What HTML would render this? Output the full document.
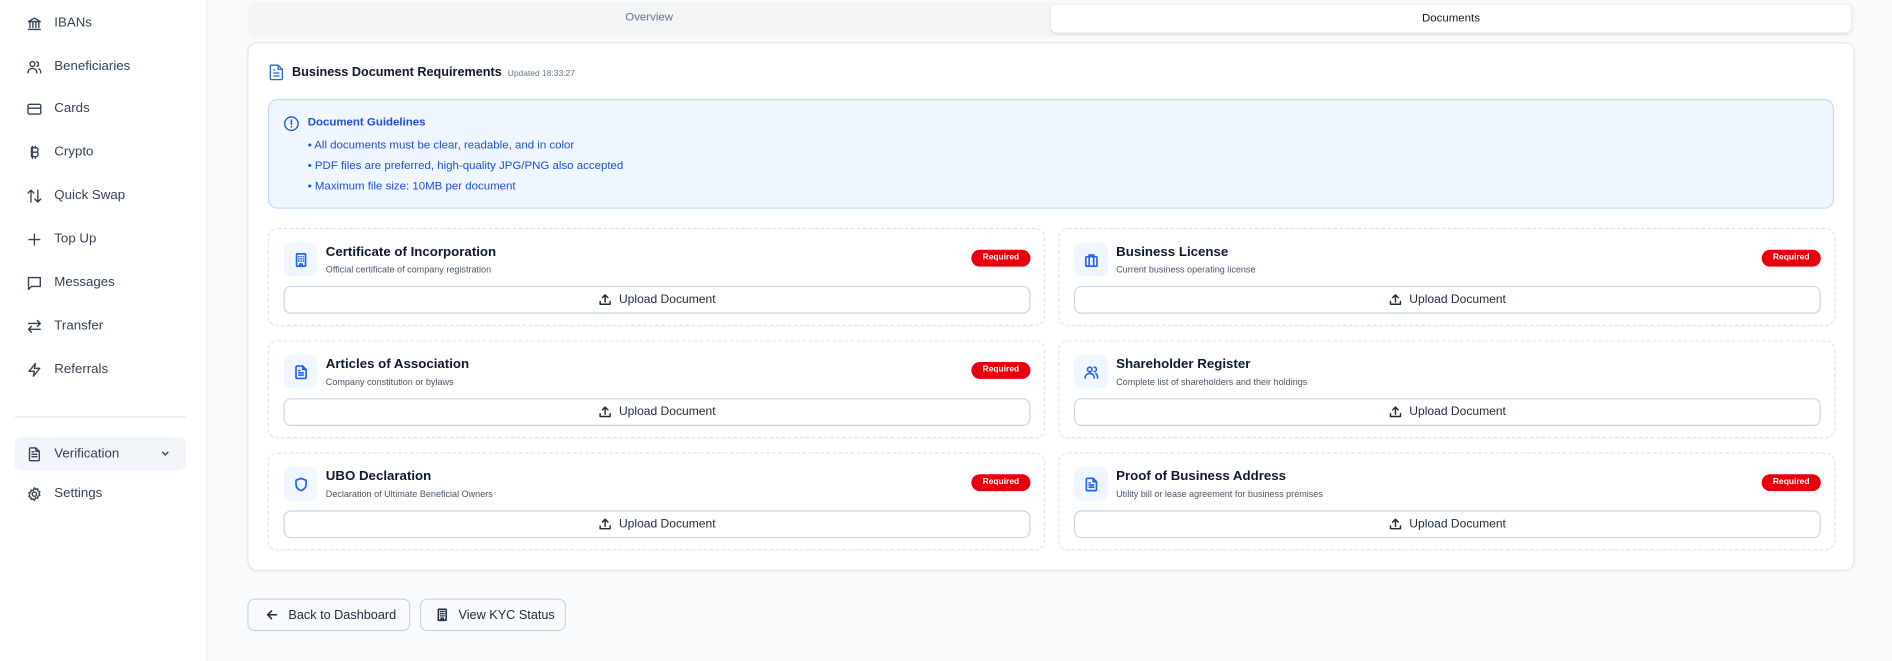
<!DOCTYPE html>
<html><head><meta charset="utf-8"><style>
*{box-sizing:border-box;margin:0;padding:0}
html,body{width:1892px;height:661px;overflow:hidden;background:#f8fafc;font-family:"Liberation Sans",sans-serif}
#w{position:absolute;left:0;top:0;width:1568px;height:548px;transform:scale(1.20663);transform-origin:0 0;background:#f8fafc}
.abs{position:absolute}
.side{left:0;top:0;width:172px;height:548px;background:#fff;border-right:1px solid #eef0f3}
.nav{position:absolute;left:22px;font-size:11px;color:#334155;display:flex;align-items:center;height:16px}
.nav svg{width:13px;height:13px;margin-right:10px;stroke:#334155;fill:none;stroke-width:1.4;stroke-linecap:round;stroke-linejoin:round}
.card{position:absolute;border:1px dashed #dfe3e8;border-radius:8px;background:#fff;width:644px;height:81px;box-shadow:0 1px 2px rgba(0,0,0,.04)}
.ib{position:absolute;left:12px;top:11px;width:28px;height:28px;border-radius:6px;background:#eff6ff;display:flex;align-items:center;justify-content:center}
.ib svg{width:13px;height:13px;stroke:#2563eb;fill:none;stroke-width:1.5;stroke-linecap:round;stroke-linejoin:round}
.t{position:absolute;left:47px;top:13px;font-size:11px;font-weight:600;color:#0f172a}
.d{position:absolute;left:47px;top:29px;font-size:7.5px;color:#475569}
.req{position:absolute;right:11px;top:17px;height:14px;width:49px;border-radius:7px;background:#e7000b;color:#fff;font-size:7px;font-weight:700;text-align:center;line-height:14px}
.up{position:absolute;left:12px;right:11px;top:47px;height:23px;border:1px solid #cbd5e1;border-radius:6px;display:flex;align-items:center;justify-content:center;font-size:10px;color:#1e293b;font-weight:400}
.up svg{width:11px;height:11px;margin-right:6px;stroke:#1e293b;fill:none;stroke-width:1.3;stroke-linecap:round;stroke-linejoin:round}
.btn{position:absolute;top:496px;height:27px;border:1px solid #cbd5e1;border-radius:6px;background:#f8fafc;display:flex;align-items:center;font-size:10.5px;font-weight:400;color:#1e293b}
.btn svg{width:11px;height:11px;stroke:#1e293b;fill:none;stroke-width:1.4;margin:0 8px 0 14px;stroke-linecap:round;stroke-linejoin:round}
.gl{font-size:9.5px;color:#1d4ed8;position:absolute;left:32px}
</style></head><body><div id="w">
<div class="abs side">
<div class="nav" style="top:11px"><svg viewBox="0 0 16 16"><path d="M2 6h12L8 2.5zM3.5 7v5M6.5 7v5M9.5 7v5M12.5 7v5M2 14h12"/></svg>IBANs</div>
<div class="nav" style="top:47px"><svg viewBox="0 0 16 16"><circle cx="6" cy="5" r="2.5"/><path d="M1.5 14c0-3 2-4.5 4.5-4.5s4.5 1.5 4.5 4.5M10.5 2.7a2.5 2.5 0 010 4.7M12.5 10c1.3.6 2 2 2 4"/></svg>Beneficiaries</div>
<div class="nav" style="top:82px"><svg viewBox="0 0 16 16"><rect x="1.5" y="3" width="13" height="10" rx="1.5"/><path d="M1.5 7h13"/></svg>Cards</div>
<div class="nav" style="top:118px"><svg viewBox="0 0 16 16"><path d="M5 3h4.5a2.2 2.2 0 010 4.5H5M5 7.5h5a2.3 2.3 0 010 4.5H5M6 1.5v12.5M9 1.5v2M9 12v2M5 3v9"/></svg>Crypto</div>
<div class="nav" style="top:154px"><svg viewBox="0 0 16 16"><path d="M4.5 14V2M1.5 5l3-3 3 3M11.5 2v12M8.5 11l3 3 3-3"/></svg>Quick Swap</div>
<div class="nav" style="top:190px"><svg viewBox="0 0 16 16"><path d="M8 2.5v11M2.5 8h11"/></svg>Top Up</div>
<div class="nav" style="top:226px"><svg viewBox="0 0 16 16"><path d="M2 2.5h12v9H5l-3 3z"/></svg>Messages</div>
<div class="nav" style="top:262px"><svg viewBox="0 0 16 16"><path d="M2 5h12M11 2l3 3-3 3M14 11H2M5 8l-3 3 3 3"/></svg>Transfer</div>
<div class="nav" style="top:298px"><svg viewBox="0 0 16 16"><path d="M9 1.5L2.5 9.5H8L7 14.5l6.5-8H8z"/></svg>Referrals</div>
<div class="abs" style="left:12px;top:345px;width:142px;height:1px;background:#e2e8f0"></div>
<div class="abs" style="left:12px;top:362px;width:142px;height:28px;border-radius:6px;background:#f1f5f9"></div>
<div class="nav" style="top:368px"><svg viewBox="0 0 16 16"><path d="M9.5 1.5H4a1 1 0 00-1 1v11a1 1 0 001 1h8a1 1 0 001-1V5z M9.5 1.5V5H13M5.5 8h5M5.5 10.5h5M5.5 5.5h2"/></svg>Verification</div>
<svg class="abs" style="left:133px;top:372px;width:8px;height:8px" viewBox="0 0 8 8"><path d="M1.5 2.5L4 5l2.5-2.5" stroke="#334155" fill="none" stroke-width="1.1"/></svg>
<div class="nav" style="top:401px"><svg viewBox="0 0 16 16"><circle cx="8" cy="8" r="2.2"/><path d="M8 1.5l1.3 1.7 2-.6.3 2.1 2 .8-.9 1.9.9 1.9-2 .8-.3 2.1-2-.6L8 14.5l-1.3-1.7-2 .6-.3-2.1-2-.8.9-1.9-.9-1.9 2-.8.3-2.1 2 .6z"/></svg>Settings</div>
</div>

<div class="abs" style="left:205px;top:2px;width:1332px;height:28px;background:#f3f4f5;border-radius:6px"></div>
<div class="abs" style="left:205px;top:9px;width:666px;text-align:center;font-size:9.5px;color:#64748b">Overview</div>
<div class="abs" style="left:871px;top:4px;width:663px;height:23px;background:#fff;border-radius:5px;box-shadow:0 1px 2px rgba(0,0,0,.1);text-align:center;font-size:9.5px;line-height:23px;color:#0f172a">Documents</div>

<div class="abs" style="left:205px;top:35px;width:1332px;height:438px;background:#fff;border:1px solid #e5e7eb;border-radius:8px;box-shadow:0 1px 2px rgba(0,0,0,.05)">
<svg class="abs" style="left:17px;top:17px;width:12px;height:14px" viewBox="0 0 12 14"><path d="M7.5 1H2a1 1 0 00-1 1v10a1 1 0 001 1h8a1 1 0 001-1V4.5zM7.5 1v3.5H11M3.5 7.5h5M3.5 10h5M3.5 5h1.5" stroke="#2563eb" fill="none" stroke-width="1.1" stroke-linejoin="round"/></svg>
<div class="abs" style="left:36px;top:18px;font-size:10.5px;font-weight:600;color:#0f172a">Business Document Requirements <span style="font-size:7px;font-weight:400;color:#64748b;margin-left:2px">Updated 18:33:27</span></div>
<div class="abs" style="left:16px;top:46px;width:1298px;height:91px;background:#eff6ff;border:1px solid #bfdbfe;border-radius:8px">
<svg class="abs" style="left:12px;top:13px;width:13px;height:13px" viewBox="0 0 14 14"><circle cx="7" cy="7" r="6" stroke="#1d4ed8" fill="none" stroke-width="1.2"/><path d="M7 3.8v3.8M7 9.6v.3" stroke="#1d4ed8" stroke-width="1.3" stroke-linecap="round"/></svg>
<div class="gl" style="top:13px;font-weight:600;font-size:9.5px">Document Guidelines</div>
<div class="gl" style="top:32px">• All documents must be clear, readable, and in color</div>
<div class="gl" style="top:49px">• PDF files are preferred, high-quality JPG/PNG also accepted</div>
<div class="gl" style="top:66px">• Maximum file size: 10MB per document</div>
</div>
</div>

<div class="card" style="left:222px;top:189px"><div class="ib"><svg viewBox="0 0 14 14"><rect x="3" y="1.5" width="8" height="11" rx=".5"/><path d="M5 4h.1M7 4h.1M9 4h.1M5 6h.1M7 6h.1M9 6h.1M5 8h.1M7 8h.1M9 8h.1M6 12.5v-2h2v2"/></svg></div><div class="t">Certificate of Incorporation</div><div class="d">Official certificate of company registration</div><div class="req">Required</div><div class="up"><svg viewBox="0 0 12 12"><path d="M6 8V1.5M3.5 4L6 1.5 8.5 4M1.5 7.5v2.5h9V7.5"/></svg>Upload Document</div></div>
<div class="card" style="left:877px;top:189px"><div class="ib"><svg viewBox="0 0 14 14"><rect x="2" y="4" width="10" height="8.5" rx="1"/><path d="M5 4V2.5h4V4M5 4v8.5M9 4v8.5"/></svg></div><div class="t">Business License</div><div class="d">Current business operating license</div><div class="req">Required</div><div class="up"><svg viewBox="0 0 12 12"><path d="M6 8V1.5M3.5 4L6 1.5 8.5 4M1.5 7.5v2.5h9V7.5"/></svg>Upload Document</div></div>
<div class="card" style="left:222px;top:282px"><div class="ib"><svg viewBox="0 0 14 14"><path d="M8.5 1.5H3.5a1 1 0 00-1 1v9a1 1 0 001 1h7a1 1 0 001-1v-7zM8.5 1.5v3h3M5 7.5h4M5 9.5h4M5 5.5h1"/></svg></div><div class="t">Articles of Association</div><div class="d">Company constitution or bylaws</div><div class="req">Required</div><div class="up"><svg viewBox="0 0 12 12"><path d="M6 8V1.5M3.5 4L6 1.5 8.5 4M1.5 7.5v2.5h9V7.5"/></svg>Upload Document</div></div>
<div class="card" style="left:877px;top:282px"><div class="ib"><svg viewBox="0 0 14 14"><circle cx="5.5" cy="4.5" r="2"/><path d="M1.5 12c0-2.5 1.8-4 4-4s4 1.5 4 4M9.5 2.5a2 2 0 010 4M11 8.3c1 .5 1.5 1.8 1.5 3.7"/></svg></div><div class="t">Shareholder Register</div><div class="d">Complete list of shareholders and their holdings</div><div class="up"><svg viewBox="0 0 12 12"><path d="M6 8V1.5M3.5 4L6 1.5 8.5 4M1.5 7.5v2.5h9V7.5"/></svg>Upload Document</div></div>
<div class="card" style="left:222px;top:375px"><div class="ib"><svg viewBox="0 0 14 14"><path d="M7 1.5l4.5 1.8v3.7c0 2.8-2 4.6-4.5 5.5C4.5 11.6 2.5 9.8 2.5 7V3.3z"/></svg></div><div class="t">UBO Declaration</div><div class="d">Declaration of Ultimate Beneficial Owners</div><div class="req">Required</div><div class="up"><svg viewBox="0 0 12 12"><path d="M6 8V1.5M3.5 4L6 1.5 8.5 4M1.5 7.5v2.5h9V7.5"/></svg>Upload Document</div></div>
<div class="card" style="left:877px;top:375px"><div class="ib"><svg viewBox="0 0 14 14"><path d="M8.5 1.5H3.5a1 1 0 00-1 1v9a1 1 0 001 1h7a1 1 0 001-1v-7zM8.5 1.5v3h3M5 7.5h4M5 9.5h4M5 5.5h1"/></svg></div><div class="t">Proof of Business Address</div><div class="d">Utility bill or lease agreement for business premises</div><div class="req">Required</div><div class="up"><svg viewBox="0 0 12 12"><path d="M6 8V1.5M3.5 4L6 1.5 8.5 4M1.5 7.5v2.5h9V7.5"/></svg>Upload Document</div></div>

<div class="btn" style="left:205px;width:135px"><svg viewBox="0 0 12 12"><path d="M10 6H2M5.5 2.5L2 6l3.5 3.5"/></svg>Back to Dashboard</div>
<div class="btn" style="left:348px;width:121px"><svg viewBox="0 0 12 12" style="margin-left:12px"><rect x="2.5" y="1" width="7" height="10" rx=".5"/><path d="M4.5 3h.1M6 3h.1M7.5 3h.1M4.5 5h.1M6 5h.1M7.5 5h.1M4.5 7h.1M6 7h.1M7.5 7h.1M5 11V9h2v2"/></svg>View KYC Status</div>
</div></body></html>
